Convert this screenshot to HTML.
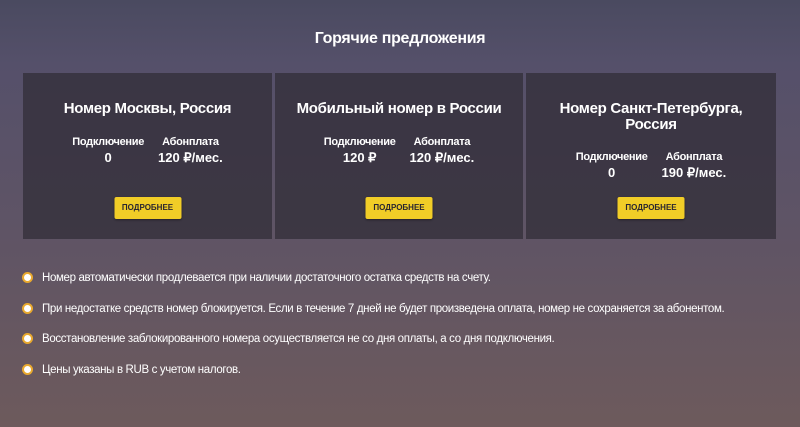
<!DOCTYPE html>
<html><head><meta charset="utf-8"><style>
*{margin:0;padding:0;box-sizing:border-box}
body{width:800px;height:427px;overflow:hidden;font-family:"Liberation Sans","Noto Sans CJK SC",sans-serif;color:#fff;background:linear-gradient(180deg,#4a4a60 0%,#55506a 15%,#5f5465 55%,#6d5a5c 100%);position:relative}
h1{position:absolute;top:30px;left:0;width:800px;text-align:center;font-size:16px;font-weight:bold;letter-spacing:-0.3px}
.card{position:absolute;top:73px;height:166px;background:rgba(50,46,56,0.75);text-align:center}
.t{position:absolute;top:28px;left:0;right:0;font-size:15px;font-weight:bold;line-height:16px;letter-spacing:-0.3px}
.cols{position:absolute;left:0;right:0;display:flex;justify-content:center;gap:14px}
.col .l{font-size:11px;font-weight:bold;line-height:15px;letter-spacing:-0.3px}
.col .v{font-size:13px;font-weight:bold;line-height:16px}
.btn{position:absolute;top:124px;left:50%;transform:translateX(-50%);width:67px;height:22px;background:#f1cd27;border-radius:2px;color:#2a2630;font-size:8px;font-weight:bold;line-height:22px;box-shadow:0 1px 2px rgba(0,0,0,.4)}
ul{list-style:none;position:absolute;left:22px;top:269px}
li{position:relative;padding-left:20px;font-size:11.5px;height:30.7px;line-height:18px;letter-spacing:-0.35px}
li:before{content:"";position:absolute;left:0;top:3px;width:11px;height:11px;border-radius:50%;background:#fff;border:2.5px solid #e9a92e;box-sizing:border-box}
</style></head><body>
<h1>Горячие предложения</h1>
<div class="card" style="left:23px;width:249px">
<div class="t">Номер Москвы, Россия</div>
<div class="cols" style="top:62px"><div class="col"><div class="l">Подключение</div><div class="v">0</div></div><div class="col"><div class="l">Абонплата</div><div class="v">120 ₽/мес.</div></div></div>
<div class="btn">ПОДРОБНЕЕ</div></div>
<div class="card" style="left:275px;width:248px">
<div class="t">Мобильный номер в России</div>
<div class="cols" style="top:62px"><div class="col"><div class="l">Подключение</div><div class="v">120 ₽</div></div><div class="col"><div class="l">Абонплата</div><div class="v">120 ₽/мес.</div></div></div>
<div class="btn">ПОДРОБНЕЕ</div></div>
<div class="card" style="left:526px;width:250px">
<div class="t">Номер Санкт-Петербурга,<br>Россия</div>
<div class="cols" style="top:77px"><div class="col"><div class="l">Подключение</div><div class="v">0</div></div><div class="col"><div class="l">Абонплата</div><div class="v">190 ₽/мес.</div></div></div>
<div class="btn">ПОДРОБНЕЕ</div></div>
<ul>
<li>Номер автоматически продлевается при наличии достаточного остатка средств на счету.</li>
<li>При недостатке средств номер блокируется. Если в течение 7 дней не будет произведена оплата, номер не сохраняется за абонентом.</li>
<li>Восстановление заблокированного номера осуществляется не со дня оплаты, а со дня подключения.</li>
<li>Цены указаны в RUB с учетом налогов.</li>
</ul>
</body></html>
